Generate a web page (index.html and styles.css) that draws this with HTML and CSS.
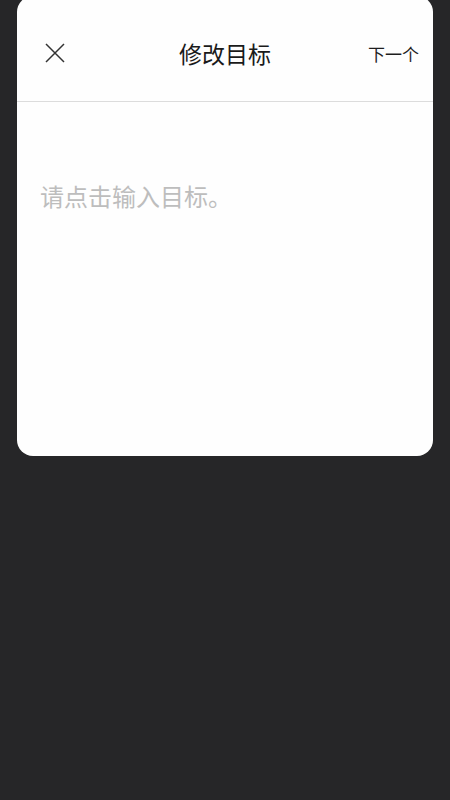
FILE: index.html
```html
<!DOCTYPE html>
<html lang="zh">
<head>
<meta charset="utf-8">
<link rel="stylesheet" href="styles.css">
</head>
<body>
<div class="card">
  <div class="header">
    <div class="close">
      <svg width="20" height="20" viewBox="0 0 20 20"><path d="M1 1L19 19M19 1L1 19" stroke="#333" stroke-width="1.5" fill="none"/></svg>
    </div>
    <div class="title">修改目标</div>
    <div class="next">下一个</div>
  </div>
  <div class="body">
    <div class="placeholder">请点击输入目标。</div>
  </div>
</div>
</body>
</html>
```
FILE: styles.css
```css
html, body {
  margin: 0;
  padding: 0;
  background: #262628;
  height: 100%;
}
body {
  font-family: "Noto Sans CJK SC", "Noto Sans", sans-serif;
  overflow: hidden;
}
.card {
  margin: -4px 17px 0;
  height: 460px;
  background: #fefefe;
  border-radius: 16px;
  box-sizing: border-box;
}
.header {
  height: 106px;
  padding-top: 9px;
  box-sizing: border-box;
  border-bottom: 1px solid #dcdcdc;
  display: grid;
  grid-template-columns: 1fr auto 1fr;
  align-items: center;
}
.close {
  padding-left: 28px;
  display: flex;
  align-items: center;
  height: 20px;
}
.close svg { display: block; }
.title {
  font-size: 23px;
  color: #1a1a1a;
  line-height: 1;
}
.next {
  justify-self: end;
  padding-right: 14px;
  font-size: 17px;
  color: #1e1e1e;
  line-height: 1;
}
.body {
  padding: 82px 23px 0;
}
.placeholder {
  font-size: 24px;
  color: #bdbdbd;
  line-height: 1;
}
```
